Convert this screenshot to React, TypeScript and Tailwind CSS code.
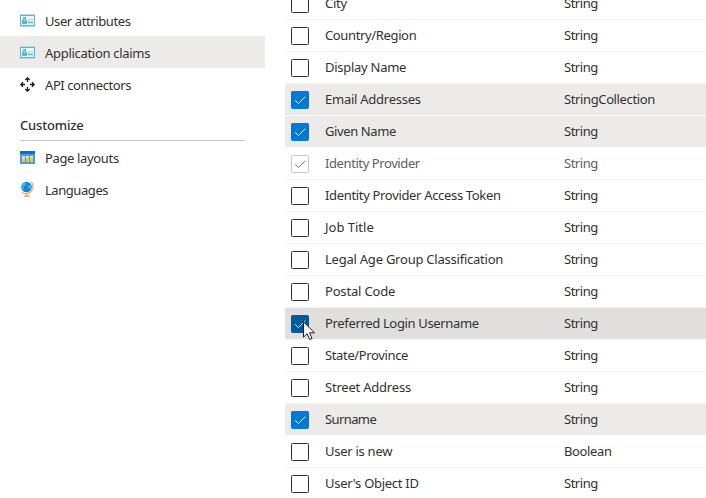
import React from 'react';

function IdCardIcon() {
  return (
    <svg width="15" height="13" viewBox="0 0 15 13" shapeRendering="crispEdges">
      <rect width="15" height="13" fill="#a9dcee" />
      <rect y="1" width="15" height="11" fill="#59b4d9" />
      <rect x="1" y="2" width="13" height="9" fill="#e8f6fb" />
      <rect x="3" y="3" width="3" height="3" fill="#6cbddf" />
      <path d="M2 6h5v4H2z" fill="#59b4d9" />
      <path d="M4 6h1v1H4z" fill="#e8f6fb" />
      <rect x="8" y="5" width="5" height="3" fill="#c4e6f3" />
      <rect x="8" y="8" width="5" height="1" fill="#59b4d9" />
      <rect x="8" y="9" width="5" height="1" fill="#c4e6f3" />
    </svg>
  );
}

function ArrowsIcon() {
  return (
    <svg width="15" height="15" viewBox="0 0 15 15" fill="none" stroke="#1b1a19" strokeWidth="1.3">
      <path d="M5.3 3 7.5 .9 9.7 3M7.5 1v4M5.3 12l2.2 2.1 2.2-2.1M7.5 14v-4M3 5.3 .9 7.5 3 9.7M1 7.5h4M12 5.3l2.1 2.2-2.1 2.2M14 7.5h-4" />
    </svg>
  );
}

function TableIcon() {
  return (
    <svg width="15" height="13" viewBox="0 0 15 13" shapeRendering="crispEdges">
      <rect width="15" height="13" fill="#4f9be6" />
      <rect width="15" height="3" fill="#0072cc" />
      <path d="M2 5h3v6H2zM6 5h3v6H6zM10 5h3v6h-3z" fill="#d3e3f2" />
      <path d="M2 8h3v3H2zM6 7h3v4H6zM10 7h3v4h-3z" fill="#e8cb1c" />
    </svg>
  );
}

function GlobeIcon() {
  return (
    <svg width="15" height="16" viewBox="0 0 15 16">
      <path d="M11.3 1c3.3 4 1.5 11-5 11.6-1.800 .1-3.300-.4-4.300-1.100" fill="none" stroke="#f5a766" strokeWidth="1.2" />
      <path d="M7 12.5v2M4 15.2h6" fill="none" stroke="#ef9a5b" strokeWidth="1.2" />
      <circle cx="6.5" cy="6" r="5.3" fill="#1683dc" />
      <path d="M2.5 2.800 5.500 1.200 6.500 2.500 5.500 4.500 3.500 5.500l.8 2.500-1.300.8L1.500 6zM8 4.500l3-1 .6 2.500-1.500 2.500L8 7z" fill="#36b8dc" />
    </svg>
  );
}

type NavEntry = { label: string; icon: React.ReactNode; tracking: string; active?: boolean };

const sidebarItems: NavEntry[] = [
  { label: 'User attributes', icon: <IdCardIcon />, tracking: 'tracking-[-0.4px]' },
  { label: 'Application claims', icon: <IdCardIcon />, tracking: 'tracking-[-0.3px]', active: true },
  { label: 'API connectors', icon: <ArrowsIcon />, tracking: 'tracking-[-0.42px]' },
];

const customizeItems: NavEntry[] = [
  { label: 'Page layouts', icon: <TableIcon />, tracking: 'tracking-[-0.35px]' },
  { label: 'Languages', icon: <GlobeIcon />, tracking: 'tracking-[-0.44px]' },
];

function NavItem({ label, icon, tracking, active }: NavEntry) {
  return (
    <a className={`flex h-8 items-center pl-5 ${active ? 'bg-[#edebe9]' : ''}`}>
      <span className="flex w-[25px] items-center">{icon}</span>
      <span className={`pt-0.5 ${tracking}`}>{label}</span>
    </a>
  );
}

type State = 'off' | 'on' | 'disabled' | 'hover';

const claims: { name: string; tracking: string; type: string; state?: State }[] = [
  { name: 'City', tracking: 'tracking-[-0.25px]', type: 'String' },
  { name: 'Country/Region', tracking: 'tracking-[-0.36px]', type: 'String' },
  { name: 'Display Name', tracking: 'tracking-[-0.27px]', type: 'String' },
  { name: 'Email Addresses', tracking: 'tracking-[-0.25px]', type: 'StringCollection', state: 'on' },
  { name: 'Given Name', tracking: 'tracking-[-0.4px]', type: 'String', state: 'on' },
  { name: 'Identity Provider', tracking: 'tracking-[-0.41px]', type: 'String', state: 'disabled' },
  { name: 'Identity Provider Access Token', tracking: 'tracking-[-0.33px]', type: 'String' },
  { name: 'Job Title', tracking: 'tracking-normal', type: 'String' },
  { name: 'Legal Age Group Classification', tracking: 'tracking-[-0.23px]', type: 'String' },
  { name: 'Postal Code', tracking: 'tracking-[-0.18px]', type: 'String' },
  { name: 'Preferred Login Username', tracking: 'tracking-[-0.34px]', type: 'String', state: 'hover' },
  { name: 'State/Province', tracking: 'tracking-[-0.36px]', type: 'String' },
  { name: 'Street Address', tracking: 'tracking-[-0.21px]', type: 'String' },
  { name: 'Surname', tracking: 'tracking-[-0.6px]', type: 'String', state: 'on' },
  { name: 'User is new', tracking: 'tracking-[-0.27px]', type: 'Boolean' },
  { name: "User's Object ID", tracking: 'tracking-[-0.28px]', type: 'String' },
];

const rowStyles: Record<State, string> = {
  off: 'border-[#f3f2f1]',
  on: 'border-[#faf9f8] bg-[#edebe9] bg-clip-padding',
  disabled: 'border-[#f3f2f1] text-[#605e5c]',
  hover: 'border-[#faf9f8] bg-[#e1dfdd] bg-clip-padding',
};

const boxStyles: Record<State, string> = {
  off: 'border-[#323130] bg-white',
  on: 'border-[#0078d4] bg-[#0078d4] text-[#f0f7fd]',
  disabled: 'border-[#c8c6c4] bg-white text-[#797775]',
  hover: 'border-[#005a9e] bg-[#005a9e] text-[#e6eff6]',
};

function Checkbox({ state }: { state: State }) {
  return (
    <span className={`relative flex h-[18px] w-[18px] items-center justify-center rounded-[1.5px] border ${boxStyles[state]}`}>
      {state !== 'off' && (
        <svg className="shrink-0" width="16" height="16" viewBox="0 0 16 16" fill="none" stroke="currentColor" strokeWidth="1">
          <path d="m3 8.200 3.400 3.400L13.300 4.700" />
        </svg>
      )}
      {state === 'hover' && (
        <svg className="absolute top-[5px] left-[11px]" width="13" height="20" viewBox="0 0 13 20">
          <path d="M.5 .8v15.400l3.600-3.500 2.500 5.800 2.400-1-2.500-5.700h5z" fill="#fff" stroke="#1b1a2b" strokeWidth="1" />
        </svg>
      )}
    </span>
  );
}

export default function App() {
  return (
    <div className="flex h-[498px] w-[706px] overflow-hidden bg-white font-['Noto_Sans',sans-serif] text-[13px] leading-[18px] text-[#323130]">
      <nav className="w-[265px] shrink-0 pt-1">
        {sidebarItems.map((item) => (
          <NavItem key={item.label} {...item} />
        ))}
        <h2 className="mr-5 ml-5 flex h-[41px] items-end border-b border-[#c8c6c4] pb-1.5 font-medium tracking-[-0.17px]">Customize</h2>
        {customizeItems.map((item) => (
          <NavItem key={item.label} {...item} />
        ))}
      </nav>
      <main className="-mt-3 ml-5 grow">
        {claims.map(({ name, tracking, type, state = 'off' }) => (
          <div key={name} className={`flex h-8 items-center border-b pl-1.5 ${rowStyles[state]}`}>
            <Checkbox state={state} />
            <span className={`ml-4 w-[239px] pb-0.5 ${tracking}`}>{name}</span>
            <span className={`pb-0.5 ${type === 'String' ? 'tracking-[-0.48px]' : 'tracking-[-0.38px]'}`}>{type}</span>
          </div>
        ))}
      </main>
    </div>
  );
}
